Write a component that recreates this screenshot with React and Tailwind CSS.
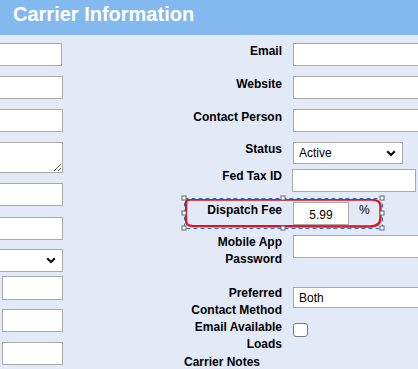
import React from 'react';

const Chevron = ({ className = '' }) => (
  <svg width="10" height="7" viewBox="0 0 10 7" className={className}>
    <polyline points="1.2,1.3 5,5 8.8,1.3" fill="none" stroke="#111" strokeWidth="2.2" />
  </svg>
);

const FakeSelect = ({ value, className = '' }) => (
  <div className={`flex items-center justify-between border border-[#a9a9a9] bg-white pl-[5px] pr-[6px] text-[12px] font-normal ${className}`}>
    <span>{value}</span>
    <Chevron />
  </div>
);

const Field = ({ className = '' }) => (
  <input type="text" className={`block border border-[#a9a9a9] bg-white outline-none ${className}`} />
);

const Row = ({ label, h, labelClass = '', children }) => (
  <div className={`flex gap-[11px] ${h}`}>
    <div className={`w-[98px] shrink-0 text-right font-bold leading-[17px] ${labelClass}`}>{label}</div>
    <div className="flex items-start">{children}</div>
  </div>
);

const handles = [
  [4, 4], [103, 4], [202, 4],
  [4, 19], [202, 19],
  [4, 34], [103, 34], [202, 34],
];

const App = () => {
  return (
    <div className="h-[369px] w-[418px] overflow-hidden bg-[#e2e9f7] font-['Liberation_Sans',Arial,sans-serif] text-[12px] text-black">
      {/* Header */}
      <div className="h-[35px] bg-[#83b9ee] pl-[13px] pt-[2px] text-[20px] font-bold leading-[24px] text-white">
        Carrier Information
      </div>

      <div className="relative flex">
        {/* Left column (scrolled off) */}
        <div className="flex w-[63px] shrink-0 flex-col overflow-hidden">
          <Field className="ml-[-100px] mt-[8px] h-[23px] w-[162px]" />
          <Field className="ml-[-100px] mt-[10px] h-[23px] w-[163px]" />
          <Field className="ml-[-100px] mt-[10px] h-[23px] w-[163px]" />
          <textarea className="ml-[-100px] mt-[10px] block h-[31px] w-[163px] border border-[#a9a9a9] bg-white outline-none" />
          <Field className="ml-[-100px] mt-[10px] h-[23px] w-[163px]" />
          <Field className="ml-[-100px] mt-[11px] h-[23px] w-[163px]" />
          <FakeSelect value="" className="ml-[-100px] mt-[9px] h-[23px] w-[163px]" />
          <Field className="ml-[2px] mt-[4px] h-[24px] w-[61px]" />
          <Field className="ml-[2px] mt-[9px] h-[23px] w-[61px]" />
          <Field className="ml-[2px] mt-[10px] h-[23px] w-[61px]" />
        </div>

        <div className="w-[121px] shrink-0" />

        {/* Right column */}
        <div className="flex flex-col pt-[8px]">
          <Row label="Email" h="h-[33px]">
            <Field className="h-[23px] w-[140px]" />
          </Row>
          <Row label="Website" h="h-[33px]">
            <Field className="h-[23px] w-[140px]" />
          </Row>
          <Row label="Contact Person" h="h-[33px]">
            <Field className="h-[23px] w-[140px]" />
          </Row>
          <Row label="Status" h="h-[27px]" labelClass="-mt-[1px]">
            <FakeSelect value="Active" className="h-[22px] w-[110px]" />
          </Row>
          <Row label="Fed Tax ID" h="h-[33px]" labelClass="-mt-[1px]">
            <Field className="-ml-[1px] h-[23px] w-[124px]" />
          </Row>
          <Row label="Dispatch Fee" h="h-[32px]">
            <input
              type="text"
              defaultValue="5.99"
              className="block h-[23px] w-[56px] border border-[#a9a9a9] bg-white pt-[2px] text-center text-[12px] outline-none"
            />
            <span className="ml-[10px] leading-[17px]">%</span>
          </Row>
          <Row label={<>Mobile App<br />Password</>} h="h-[52px]">
            <Field className="mt-[1px] h-[23px] w-[140px]" />
          </Row>
          <Row label={<>Preferred<br />Contact Method</>} h="h-[34px]" labelClass="-mt-[1px]">
            <div className="mt-[1px] flex h-[21px] w-[140px] items-center border border-[#a9a9a9] bg-white pl-[5px]">Both</div>
          </Row>
          <Row label={<>Email Available<br />Loads</>} h="h-[34px]" labelClass="-mt-[1px]">
            <div className="mt-[3px] h-[14px] w-[15px] rounded-[3px] border border-[#7a7a7a] bg-white" />
          </Row>
          <div className="w-[98px] font-bold leading-[17px]">Carrier Notes</div>
        </div>

        {/* Selection highlight around Dispatch Fee */}
        <svg
          className="pointer-events-none absolute left-[180px] top-[159px]"
          width="206"
          height="38"
          viewBox="0 0 206 38"
        >
          <path
            d="M6 9 L6 27 Q6 31.5 12 32 L190 32.5 Q200.5 32.5 200.5 24 L200.5 12 Q200.5 6 192 5.6 L10 5.6 Q6 5.6 6 9 Z"
            fill="none"
            stroke="#e3121f"
            strokeWidth="2.4"
          />
          <rect x="4.5" y="4.5" width="198" height="30" fill="none" stroke="#ffffff" strokeWidth="1" />
          <rect x="4.5" y="4.5" width="198" height="30" fill="none" stroke="#1f6fd6" strokeWidth="1" strokeDasharray="4 3" />
          {handles.map(([x, y], i) => (
            <rect key={i} x={x - 2} y={y - 2} width="4" height="4" fill="#fff" stroke="#666" strokeWidth="1" />
          ))}
        </svg>
      </div>
    </div>
  );
};

export default App;
